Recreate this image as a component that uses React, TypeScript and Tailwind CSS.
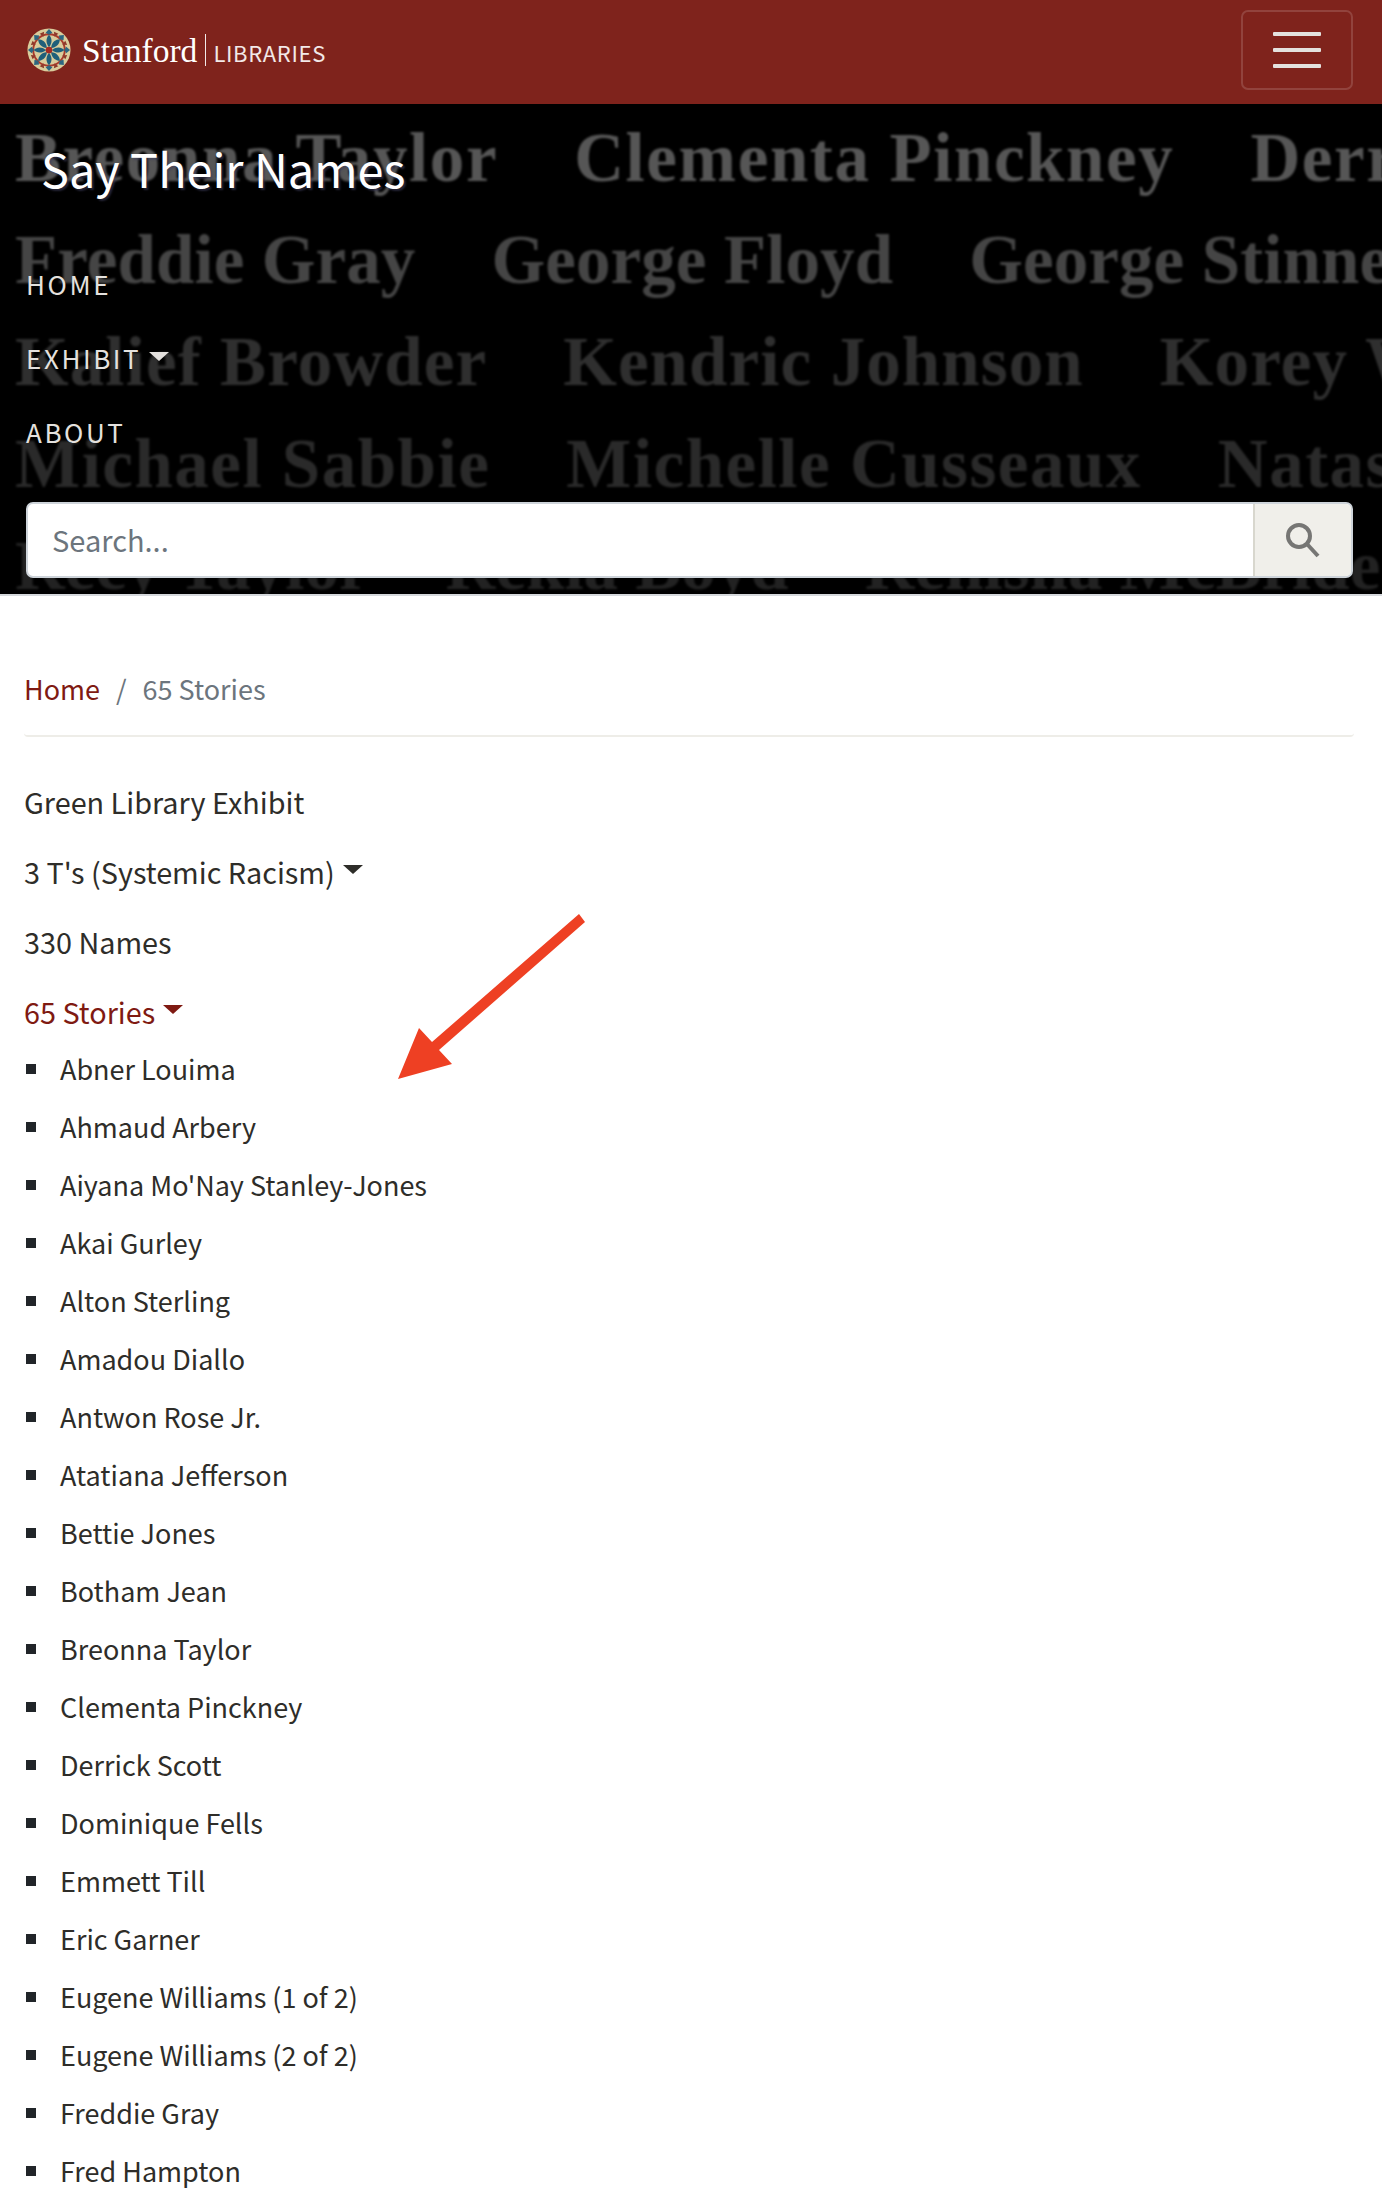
const font = "font-['Noto_Sans_CJK_SC','Noto_Sans',sans-serif]";

const heroRows = [
  { names: ["Breonna Taylor", "Clementa Pinckney", "Derrick Scott"], color: "text-[#565656] tracking-[1.6px]" },
  { names: ["Freddie Gray", "George Floyd", "George Stinney"], color: "text-[#454545] tracking-[0.1px]" },
  { names: ["Kalief Browder", "Kendric Johnson", "Korey Wise"], color: "text-[#2f2f2f] tracking-[1.1px]" },
  { names: ["Michael Sabbie", "Michelle Cusseaux", "Natasha McKenna"], color: "text-[#2a2a2a] tracking-[1.5px]" },
  { names: ["Recy Taylor", "Rekia Boyd", "Renisha McBride"], color: "text-[#222222] tracking-[0px]" },
];

const stories = [
  "Abner Louima",
  "Ahmaud Arbery",
  "Aiyana Mo'Nay Stanley-Jones",
  "Akai Gurley",
  "Alton Sterling",
  "Amadou Diallo",
  "Antwon Rose Jr.",
  "Atatiana Jefferson",
  "Bettie Jones",
  "Botham Jean",
  "Breonna Taylor",
  "Clementa Pinckney",
  "Derrick Scott",
  "Dominique Fells",
  "Emmett Till",
  "Eric Garner",
  "Eugene Williams (1 of 2)",
  "Eugene Williams (2 of 2)",
  "Freddie Gray",
  "Fred Hampton",
];

function Caret({ className }: { className: string }) {
  return <span className={`inline-block w-0 h-0 border-x-[10px] border-x-transparent border-t-[9px] ${className}`} />;
}

function Logo() {
  const petals = [0, 45, 90, 135, 180, 225, 270, 315];
  return (
    <svg width="44" height="44" viewBox="0 0 46 46" className="shrink-0">
      <circle cx="23" cy="23" r="22.5" fill="#d9cc9c" />
      <circle cx="23" cy="23" r="16.5" fill="none" stroke="#a83a2c" strokeWidth="2" />
      {petals.map((a) => (
        <g key={a} transform={`rotate(${a} 23 23)`}>
          <path d="M23 20 C19 15 20 10 23 7 C26 10 27 15 23 20Z" fill="#1f5f7a" />
          <path d="M23 1 L26.5 5 L23 7 L19.5 5Z" fill="#2c6680" />
        </g>
      ))}
      {petals.map((a) => (
        <path key={a} transform={`rotate(${a + 22.5} 23 23)`} d="M20.5 3.5 L25.5 3.5 L23 8Z" fill="#8d3a2b" />
      ))}
      <circle cx="23" cy="23" r="3.5" fill="#a62a22" />
    </svg>
  );
}

export default function App() {
  return (
    <div className={`${font} relative bg-white h-[2190px] overflow-hidden text-[27px] leading-[40px] text-[#2e2d29]`}>
      <header className="h-[104px] bg-[#7f231c] flex items-center justify-between pl-[27px] pr-[29px] pb-[4px] shadow-[0_1px_3px_rgba(0,0,0,0.4)] relative z-10">
        <div className="flex items-center">
          <Logo />
          <span className="ml-[11px] mt-[2px] font-['Liberation_Serif',serif] text-[33.5px] leading-none text-white">Stanford</span>
          <span className="ml-[8px] w-px h-[32px] bg-white/90" />
          <span className="ml-[7px] text-[22px] leading-none tracking-[0.03em] text-white/90 mt-[4px]">LIBRARIES</span>
        </div>
        <button className="w-[112px] h-[80px] rounded-[7px] border-2 border-white/15 flex flex-col items-center justify-center gap-[12px]">
          <span className="block w-[48px] h-[4px] rounded-[1px] bg-[#e4e1de]" />
          <span className="block w-[48px] h-[4px] rounded-[1px] bg-[#e4e1de]" />
          <span className="block w-[48px] h-[4px] rounded-[1px] bg-[#e4e1de]" />
        </button>
      </header>

      <section className="relative h-[492px] bg-black overflow-hidden border-b-2 border-[#d5d8dc] pl-[26px] pr-[29px]">
        <div className="absolute left-[15px] top-[3px] font-['Liberation_Serif',serif] font-bold text-[69px] leading-[102px] whitespace-nowrap blur-[1px] select-none">
          {heroRows.map((row) => (
            <div key={row.names[0]} className={`flex gap-[76px] ${row.color}`}>
              {row.names.map((n) => (
                <span key={n}>{n}</span>
              ))}
            </div>
          ))}
        </div>
        <div className="relative">
          <h1 className="pt-[31px] pl-[15px] text-[46.8px] leading-[66px] text-white font-normal [text-shadow:2px_2px_2px_rgba(60,60,90,0.6)]">Say Their Names</h1>
          <nav className="mt-[63px] flex flex-col gap-[34px] text-[26px] leading-[40px] tracking-[0.1em] text-[#e4e1de]">
            <a>HOME</a>
            <a className="flex items-center gap-[8px]">EXHIBIT <Caret className="border-t-[#e4e1de] mb-[4px]" /></a>
            <a>ABOUT</a>
          </nav>
          <div className="mt-[50px] flex h-[76px] rounded-[7px] overflow-hidden border-2 border-[#ced4da] bg-white">
            <div className="flex-1 flex items-center pl-[24px] pb-[2px] text-[29px] text-[#6c757d]">Search...</div>
            <div className="w-[98px] flex items-center justify-center bg-[#f0efea] border-l-2 border-[#d8d7ce]">
              <svg width="36" height="36" viewBox="0 0 36 36" fill="none" stroke="#767674" strokeWidth="4">
                <circle cx="14" cy="14" r="11" />
                <path d="M22 22 L33 34" />
              </svg>
            </div>
          </div>
        </div>
      </section>

      <main className="pl-[24px] pr-[28px] pt-[73px]">
        <div className="flex items-center pb-[26px] border-b-2 border-[#eeede8] rounded-b-[4px]">
          <a className="text-[#7f1a12]">Home</a>
          <span className="ml-[16px] mr-[16px] text-[#6c757d]">/</span>
          <span className="text-[#6c757d]">65 Stories</span>
        </div>

        <nav className="mt-[45px] flex flex-col gap-[30px] text-[28.8px]">
          <a>Green Library Exhibit</a>
          <a className="flex items-center gap-[8px]">3 T's (Systemic Racism) <Caret className="border-t-[#2e2d29] mb-[6px]" /></a>
          <a>330 Names</a>
          <div>
            <a className="flex items-center gap-[8px] text-[#7f1a12]">65 Stories <Caret className="border-t-[#7f1a12] mb-[6px]" /></a>
            <ul className="mt-[17px] flex flex-col gap-[18px] text-[27px]">
              {stories.map((s) => (
                <li key={s} className="flex items-center">
                  <span className="w-[10px] h-[10px] bg-[#212529] ml-[2px]" />
                  <span className="ml-[24px]">{s}</span>
                </li>
              ))}
            </ul>
          </div>
        </nav>
      </main>

      <svg className="absolute left-[395px] top-[910px]" width="200" height="175" viewBox="0 0 200 175">
        <path d="M3 169 L24 118 L37 132 L184 4 L190 12 L44 140 L57 154Z" fill="#ee4023" />
      </svg>
    </div>
  );
}
